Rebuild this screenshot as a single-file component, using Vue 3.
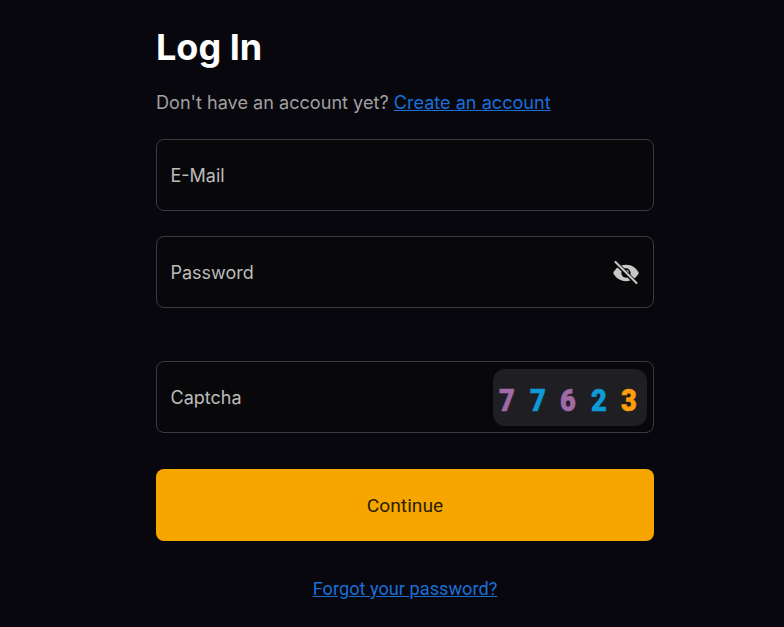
<script setup>
const digits = [
  { ch: '7', color: '#a06aa6' },
  { ch: '7', color: '#0c9bd6' },
  { ch: '6', color: '#a06aa6' },
  { ch: '2', color: '#0c9bd6' },
  { ch: '3', color: '#ff9d0a' }
]
</script>

<template>
  <main class="page">
    <section class="panel">
      <h1 class="title">Log In</h1>
      <p class="lead">Don't have an account yet? <a class="link" href="#">Create an account</a></p>

      <div class="field field-email"><span>E-Mail</span></div>

      <div class="field field-password">
        <span>Password</span>
        <svg class="eye" viewBox="0 0 24 24" width="28" height="28" aria-hidden="true">
          <path fill="#c8c8c8" d="M12 5C7 5 3 8 1 12c2 4 6 7 11 7s9-3 11-7c-2-4-6-7-11-7Z" />
          <circle cx="12" cy="12" r="4" fill="#060609" />
          <circle cx="12.500" cy="11.500" r="2" fill="#c8c8c8" />
          <path d="M3.500 3.500 20.500 20.500" stroke="#060609" stroke-width="3.600" />
          <path d="M3 2.500 21 20.500" stroke="#c8c8c8" stroke-width="1.800" stroke-linecap="round" />
        </svg>
      </div>

      <div class="field field-captcha">
        <span>Captcha</span>
        <div class="captcha">
          <span
            v-for="(d, i) in digits"
            :key="i"
            class="digit"
            :style="{ color: d.color }"
          >{{ d.ch }}</span>
        </div>
      </div>

      <button class="submit" type="button">Continue</button>

      <div class="forgot"><a class="link link-forgot" href="#">Forgot your password?</a></div>
    </section>
  </main>
</template>

<style>
html, body { margin: 0; background: #07070d; }
</style>

<style scoped>
.page {
  width: 784px;
  height: 627px;
  overflow: hidden;
  background: #07070d;
  font-family: Inter, "Liberation Sans", sans-serif;
  box-sizing: border-box;
  padding-left: 156px;
}
.panel {
  width: 498px;
  display: flex;
  flex-direction: column;
  padding-top: 26px;
}
.title {
  margin: 0;
  font-size: 36px;
  line-height: 42px;
  font-weight: 700;
  color: #fff;
}
.lead {
  margin: 22px 0 0;
  font-size: 18.100px;
  line-height: 24px;
  color: #a0a0a0;
}
.link { color: #1a6fd8; text-decoration: underline; }
.field {
  box-sizing: border-box;
  height: 72px;
  border: 1px solid #3a3a42;
  border-radius: 8px;
  background: #08080a;
  padding: 1px 13px 0 13.500px;
  display: flex;
  align-items: center;
  justify-content: space-between;
  font-size: 18px;
  color: #bcbcbc;
}
.field-email { margin-top: 25px; }
.field-password { margin-top: 25px; }
.field-captcha { margin-top: 53px; padding-right: 6px; }
.eye { display: block; margin-top: 1px; }
.captcha {
  width: 154px;
  height: 57px;
  margin-top: -1px;
  border-radius: 12px;
  background: #1f1f23;
  display: flex;
  align-items: center;
  justify-content: space-between;
  padding: 6px 7px 0 3px;
  box-sizing: border-box;
}
.digit {
  font-family: Roboto, sans-serif;
  font-weight: 900;
  font-size: 31px;
  line-height: 1;
  display: block;
  width: 22px;
  text-align: center;
  transform: scaleX(0.88);
  -webkit-text-stroke: 0.6px currentColor;
}
.submit {
  margin-top: 36px;
  height: 72px;
  border: 0;
  border-radius: 8px;
  background: #f7a600;
  color: #2b1e00;
  font-family: Roboto, sans-serif;
  font-size: 19.200px;
}
.forgot { margin-top: 36px; text-align: center; }
.link-forgot { font-family: Roboto, sans-serif; font-size: 18.200px; line-height: 24px; }
</style>
